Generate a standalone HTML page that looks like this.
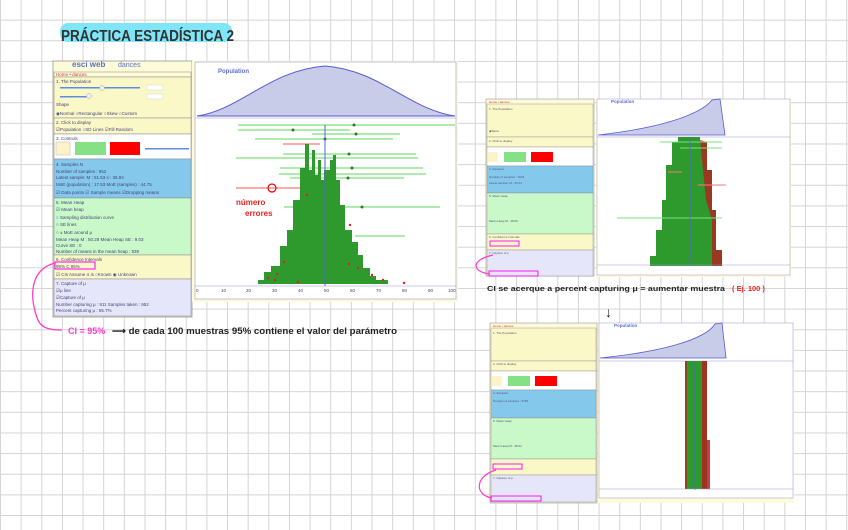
<!DOCTYPE html>
<html><head><meta charset="utf-8"><style>
html,body{margin:0;padding:0}
body{width:848px;height:530px;overflow:hidden;background:#fff;
background-image:linear-gradient(#d4d4d4 1px,transparent 1px),linear-gradient(90deg,#d4d4d4 1px,transparent 1px);
background-size:20.65px 20.65px;background-position:0 -1px;font-family:"Liberation Sans",sans-serif}
svg{position:absolute;left:0;top:0}
text{font-family:"Liberation Sans",sans-serif}
</style></head><body>
<svg width="848" height="530" viewBox="0 0 848 530">
<!-- title -->
<rect x="60" y="23" width="172" height="19" rx="8" fill="#7fe6f7"/>
<text x="61" y="41" font-size="16" font-weight="bold" fill="#333" textLength="173" lengthAdjust="spacingAndGlyphs">PRÁCTICA ESTADÍSTICA 2</text>

<!-- LEFT PANEL -->
<g font-size="4.5" fill="#447">
<rect x="53" y="61" width="139" height="256" fill="#fdfbd8" stroke="#999" stroke-width="0.8"/>
<text x="72" y="67" font-size="8" fill="#5a6fd0" font-weight="bold">esci web</text><text x="118" y="67" font-size="7" fill="#5a6fd0">dances</text>
<rect x="54" y="72" width="137" height="5" fill="#fdfbd8" stroke="#888" stroke-width="0.5"/>
<text x="56" y="76" fill="#d33">Home • dances</text>
<rect x="54" y="77" width="137" height="41" fill="#fbf8c8" stroke="#888" stroke-width="0.5"/>
<text x="56" y="83">1. The Population</text>
<rect x="60" y="87" width="80" height="1.5" fill="#5b8ee0"/><circle cx="102" cy="88" r="2.5" fill="#eee" stroke="#999" stroke-width=".4"/>
<rect x="147" y="85" width="16" height="5" fill="#fff" stroke="#ccc" stroke-width=".4"/>
<rect x="60" y="96" width="30" height="1.5" fill="#5b8ee0"/><circle cx="89" cy="96" r="2.5" fill="#eee" stroke="#999" stroke-width=".4"/>
<rect x="147" y="94" width="16" height="5" fill="#fff" stroke="#ccc" stroke-width=".4"/>
<text x="56" y="106">Shape</text>
<text x="56" y="115">◉Normal ○Rectangular ○Skew  ○Custom</text>
<rect x="54" y="118" width="137" height="16" fill="#fbf8c8" stroke="#888" stroke-width="0.5"/>
<text x="56" y="124">2. Click to display</text>
<text x="56" y="131">☑Population ○SD Lines ☑Fill Random</text>
<rect x="54" y="134" width="137" height="25" fill="#fff" stroke="#888" stroke-width="0.5"/>
<text x="56" y="140">3. Controls</text>
<rect x="56" y="142" width="14" height="13" fill="#fdf3c8" stroke="#bbb" stroke-width=".5"/>
<rect x="75" y="142" width="31" height="13" fill="#86e086"/>
<rect x="110" y="142" width="30" height="13" fill="#f00"/>
<rect x="145" y="148" width="44" height="1.5" fill="#5b8ee0"/>
<rect x="54" y="159" width="137" height="39" fill="#84c8ec" stroke="#888" stroke-width="0.5"/>
<text x="56" y="166">4. Samples   N</text>
<text x="56" y="173">Number of samples : 952</text>
<text x="56" y="179">Latest sample: M : 51.53   s : 36.84</text>
<text x="56" y="186">MoE (population) : 17.53   MoE (samples) : 44.75</text>
<text x="56" y="194">☑ Data points ☑ Sample means ☑Dropping means</text>
<rect x="54" y="198" width="137" height="57" fill="#c9f8c9" stroke="#888" stroke-width="0.5"/>
<text x="56" y="204">5. Mean Heap</text>
<text x="56" y="211">☑ Mean heap</text>
<text x="56" y="219">○ Sampling distribution curve</text>
<text x="56" y="226">○ SE lines</text>
<text x="56" y="234">○ ± MoE around μ</text>
<text x="56" y="241">Mean Heap M : 50.28       Mean Heap SE : 9.03</text>
<text x="56" y="247">Curve SE : 0</text>
<text x="56" y="253">Number of means in the mean heap : 939</text>
<rect x="54" y="255" width="137" height="24" fill="#fbf8c8" stroke="#888" stroke-width="0.5"/>
<text x="56" y="261">6. Confidence Intervals</text>
<text x="56" y="268">95% C  95%</text>
<text x="56" y="276">☑ CIs  Assume σ is  ○Known ◉ Unknown</text>
<rect x="54" y="279" width="137" height="37" fill="#e6e6fa" stroke="#888" stroke-width="0.5"/>
<text x="56" y="285">7. Capture of μ</text>
<text x="56" y="292">☑μ line</text>
<text x="56" y="299">☑Capture of μ</text>
<text x="56" y="306">Number capturing μ : 911   Samples taken : 952</text>
<text x="56" y="312">Percent capturing μ : 95.7%</text>
</g>
<rect x="55" y="262" width="40" height="7" fill="none" stroke="#f0f" stroke-width="1"/>

<!-- LEFT CHART -->
<rect x="192" y="61" width="266" height="241" fill="#fdfbd8"/>
<rect x="195" y="62" width="261" height="237" fill="#fff" stroke="#99c" stroke-width=".6"/>
<text x="218" y="73" font-size="6" font-weight="bold" fill="#5a6fd0">Population</text>
<path d="M197 116 C240 110 270 70 325 66 C380 70 410 110 455 116 Z" fill="#c8cce8" stroke="#5a5ad0" stroke-width="1"/>
<line x1="195" y1="118" x2="456" y2="118" stroke="#99c" stroke-width=".6"/>
<g stroke="#7ee07e" stroke-width="1.2">
<line x1="238" y1="125" x2="455" y2="125"/><line x1="238" y1="130" x2="350" y2="130"/>
<line x1="312" y1="134" x2="400" y2="134"/><line x1="255" y1="139" x2="393" y2="139"/>
<line x1="283" y1="154" x2="416" y2="154"/><line x1="236" y1="158" x2="418" y2="158"/>
<line x1="280" y1="168" x2="423" y2="168"/><line x1="279" y1="174" x2="426" y2="174"/>
<line x1="290" y1="178" x2="404" y2="178"/><line x1="284" y1="207" x2="440" y2="207"/>
<line x1="355" y1="236" x2="405" y2="236"/>
</g>
<g stroke="#f77" stroke-width="1.2"><line x1="283" y1="144" x2="320" y2="144"/><line x1="236" y1="188" x2="300" y2="188"/></g>
<path d="M258 284 L258 280 L264 280 L264 272 L271 272 L271 266 L280 266 L280 246 L287 246 L287 230 L293 230 L293 200 L300 200 L300 168 L305 168 L305 144 L309 144 L309 170 L312 170 L312 150 L315 150 L315 175 L318 175 L318 160 L321 160 L321 180 L324 180 L324 170 L330 170 L330 160 L333 160 L333 155 L336 155 L336 180 L340 180 L340 205 L345 205 L345 230 L352 230 L352 242 L358 242 L358 255 L363 255 L363 268 L370 268 L370 276 L376 276 L376 280 L388 280 L388 284 Z" fill="#2e9a2e"/>
<g fill="#d22"><circle cx="268" cy="278" r="1.2"/><circle cx="275" cy="280" r="1.2"/><circle cx="284" cy="262" r="1.2"/><circle cx="298" cy="282" r="1.2"/><circle cx="307" cy="195" r="1.2"/><circle cx="350" cy="225" r="1.2"/><circle cx="349" cy="264" r="1.2"/><circle cx="358" cy="268" r="1.2"/><circle cx="372" cy="275" r="1.2"/><circle cx="383" cy="280" r="1.2"/><circle cx="404" cy="283" r="1.2"/><circle cx="277" cy="274" r="1.2"/></g>
<g fill="#2a7a2a"><circle cx="354" cy="125" r="1.5"/><circle cx="293" cy="130" r="1.5"/><circle cx="356" cy="134" r="1.5"/><circle cx="325" cy="139" r="1.5"/><circle cx="349" cy="154" r="1.5"/><circle cx="352" cy="168" r="1.5"/><circle cx="348" cy="178" r="1.5"/><circle cx="362" cy="207" r="1.5"/></g>
<line x1="325" y1="125" x2="325" y2="286" stroke="#5560d8" stroke-width="1"/>
<circle cx="272" cy="188" r="4" fill="none" stroke="#e00" stroke-width="1.2"/>
<text x="236" y="205" font-size="8" fill="#e22" font-weight="bold">número</text>
<text x="245" y="216" font-size="8" fill="#e22" font-weight="bold">errores</text>
<line x1="195" y1="286" x2="456" y2="286" stroke="#99c" stroke-width=".6"/>
<g font-size="4.5" fill="#447"><text x="196" y="292">0</text><text x="221" y="292">10</text><text x="246" y="292">20</text><text x="272" y="292">30</text><text x="298" y="292">40</text><text x="324" y="292">50</text><text x="350" y="292">60</text><text x="376" y="292">70</text><text x="402" y="292">80</text><text x="428" y="292">90</text><text x="448" y="292">100</text></g>

<!-- pink bracket left -->
<path d="M55 263 C28 270 30 300 38 320 C42 330 55 330 62 330" fill="none" stroke="#ff3cc8" stroke-width="1.3"/>
<text x="68" y="334" font-size="9" fill="#ff3cc8" font-weight="bold">CI = 95%</text>
<text x="112" y="334" font-size="9" fill="#222" font-weight="bold" textLength="285" lengthAdjust="spacingAndGlyphs">⟶ de cada 100 muestras 95% contiene el valor del parámetro</text>

<!-- RIGHT TOP PANEL -->
<g>
<rect x="486" y="99" width="108" height="177" fill="#fdfbd8" stroke="#999" stroke-width=".6"/>
<rect x="487" y="104" width="106" height="33" fill="#fbf8c8" stroke="#888" stroke-width=".4"/>
<rect x="487" y="137" width="106" height="10" fill="#fbf8c8" stroke="#888" stroke-width=".4"/>
<rect x="487" y="147" width="106" height="19" fill="#fff" stroke="#888" stroke-width=".4"/>
<rect x="488" y="152" width="10" height="10" fill="#fdf3c8"/><rect x="504" y="152" width="22" height="10" fill="#86e086"/><rect x="531" y="152" width="22" height="10" fill="#f00"/>
<rect x="487" y="166" width="106" height="27" fill="#84c8ec" stroke="#888" stroke-width=".4"/>
<rect x="487" y="193" width="106" height="41" fill="#c9f8c9" stroke="#888" stroke-width=".4"/>
<rect x="487" y="234" width="106" height="16" fill="#fbf8c8" stroke="#888" stroke-width=".4"/>
<rect x="487" y="250" width="106" height="26" fill="#e6e6fa" stroke="#888" stroke-width=".4"/>
<rect x="490" y="241" width="29" height="5" fill="none" stroke="#f0f" stroke-width=".9"/>
<rect x="489" y="271" width="49" height="5" fill="none" stroke="#f0f" stroke-width=".9"/>
<g font-size="3" fill="#557"><text x="489" y="103" fill="#d33">Home • dances</text><text x="489" y="110">1. The Population</text><text x="489" y="132">◉Skew</text><text x="489" y="142">2. Click to display</text><text x="489" y="170">4. Samples</text><text x="489" y="178">Number of samples : 1533</text><text x="489" y="184">Latest sample: M : 43.14</text><text x="489" y="197">5. Mean Heap</text><text x="489" y="222">Mean Heap M : 48.06</text><text x="489" y="238">6. Confidence Intervals</text><text x="489" y="254">7. Capture of μ</text></g>
<path d="M493 255 C470 260 472 272 490 274" fill="none" stroke="#ff3cc8" stroke-width="1.2"/>
</g>
<rect x="596" y="99" width="195" height="178" fill="#fdfbd8"/>
<rect x="597" y="99" width="193" height="176" fill="#fff" stroke="#99c" stroke-width=".5"/>
<text x="611" y="103" font-size="4.5" font-weight="bold" fill="#5a6fd0">Population</text>
<path d="M598 135 C660 128 700 115 712 100 L720 99 L725 135 Z" fill="#c8cce8" stroke="#5a5ad0" stroke-width=".8"/>
<line x1="597" y1="137" x2="790" y2="137" stroke="#99c" stroke-width=".5"/>
<path d="M650 266 L650 256 L656 256 L656 230 L662 230 L662 200 L666 200 L666 165 L672 165 L672 142 L678 142 L678 137 L700 137 L700 142 L707 142 L707 170 L712 170 L712 210 L716 210 L716 250 L722 250 L722 266 Z" fill="#2e9a2e"/>
<path d="M700 140 L707 142 L707 170 L712 170 L712 210 L716 210 L716 250 L722 250 L722 266 L712 266 L712 220 L706 200 Z" fill="#b52020" opacity=".8"/>
<g stroke="#7ee07e" stroke-width="1"><line x1="660" y1="142" x2="722" y2="142"/><line x1="680" y1="148" x2="722" y2="148"/><line x1="617" y1="218" x2="722" y2="218"/></g>
<g stroke="#f77" stroke-width="1"><line x1="668" y1="172" x2="682" y2="172"/><line x1="698" y1="185" x2="726" y2="185"/></g>
<line x1="690" y1="137" x2="690" y2="266" stroke="#5560d8" stroke-width=".8"/>
<line x1="597" y1="265" x2="790" y2="265" stroke="#99c" stroke-width=".5"/>
<text x="487" y="291" font-size="7.5" fill="#222" font-weight="bold" textLength="238" lengthAdjust="spacingAndGlyphs">CI se acerque a percent capturing μ = aumentar muestra</text>
<text x="732" y="291" font-size="7.5" fill="#e22" font-weight="bold">( Ej. 100 )</text>
<text x="605" y="317" font-size="14" fill="#222">↓</text>

<!-- RIGHT BOTTOM -->
<rect x="490" y="323" width="107" height="180" fill="#fdfbd8" stroke="#999" stroke-width=".6"/>
<rect x="491" y="328" width="105" height="33" fill="#fbf8c8" stroke="#888" stroke-width=".4"/>
<rect x="491" y="361" width="105" height="10" fill="#fbf8c8" stroke="#888" stroke-width=".4"/>
<rect x="491" y="371" width="105" height="19" fill="#fff" stroke="#888" stroke-width=".4"/>
<rect x="492" y="376" width="10" height="10" fill="#fdf3c8"/><rect x="508" y="376" width="22" height="10" fill="#86e086"/><rect x="535" y="376" width="22" height="10" fill="#f00"/>
<rect x="491" y="390" width="105" height="28" fill="#84c8ec" stroke="#888" stroke-width=".4"/>
<rect x="491" y="418" width="105" height="41" fill="#c9f8c9" stroke="#888" stroke-width=".4"/>
<rect x="491" y="459" width="105" height="16" fill="#fbf8c8" stroke="#888" stroke-width=".4"/>
<rect x="491" y="475" width="105" height="27" fill="#e6e6fa" stroke="#888" stroke-width=".4"/>
<rect x="493" y="464" width="29" height="5" fill="none" stroke="#f0f" stroke-width=".9"/>
<rect x="491" y="496" width="50" height="5" fill="none" stroke="#f0f" stroke-width=".9"/>
<path d="M496 470 C475 476 474 495 492 498" fill="none" stroke="#ff3cc8" stroke-width="1.2"/>
<g font-size="3" fill="#557"><text x="493" y="327" fill="#d33">Home • dances</text><text x="493" y="334">1. The Population</text><text x="493" y="365">2. Click to display</text><text x="493" y="394">4. Samples</text><text x="493" y="402">Number of samples : 9784</text><text x="493" y="422">5. Mean Heap</text><text x="493" y="447">Mean Heap M : 48.92</text><text x="493" y="479">7. Capture of μ</text></g>
<rect x="598" y="323" width="196" height="180" fill="#fdfbd8"/>
<rect x="599" y="323" width="194" height="175" fill="#fff" stroke="#99c" stroke-width=".5"/>
<text x="614" y="327" font-size="4.5" font-weight="bold" fill="#5a6fd0">Population</text>
<path d="M600 358 C660 352 705 340 715 324 L722 323 L726 358 Z" fill="#c8cce8" stroke="#5a5ad0" stroke-width=".8"/>
<line x1="599" y1="361" x2="793" y2="361" stroke="#99c" stroke-width=".5"/>
<rect x="685" y="361" width="22" height="128" fill="#2e9a2e"/>
<rect x="702" y="361" width="5" height="128" fill="#b52020" opacity=".85"/>
<rect x="685" y="361" width="2" height="128" fill="#b52020" opacity=".7"/>
<rect x="707" y="440" width="3" height="49" fill="#b52020" opacity=".85"/>
<line x1="695" y1="361" x2="695" y2="490" stroke="#5560d8" stroke-width=".8"/>
<line x1="599" y1="489" x2="793" y2="489" stroke="#99c" stroke-width=".5"/>
</svg>
</body></html>
